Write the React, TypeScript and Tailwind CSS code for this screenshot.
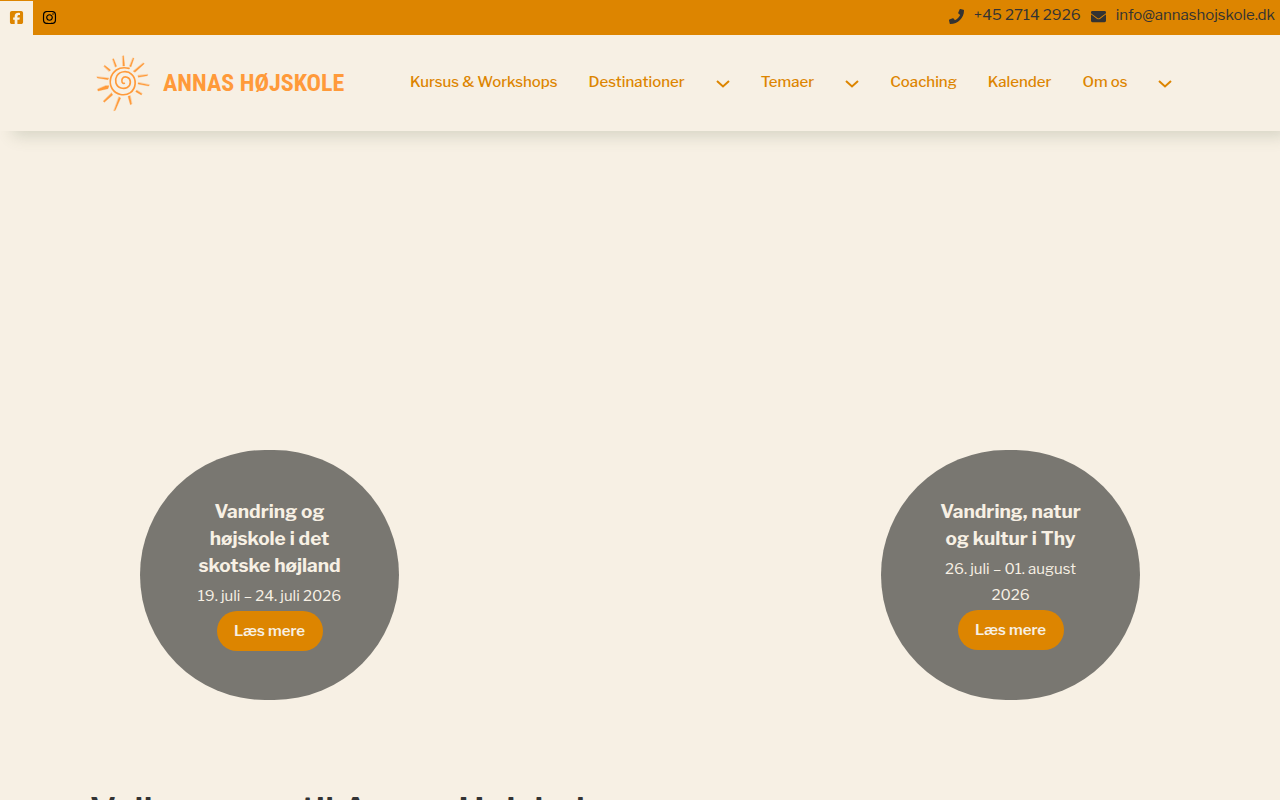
import { FaEnvelope, FaInstagram, FaPhone } from "react-icons/fa";
import { FaSquareFacebook } from "react-icons/fa6";

type NavItem = { label: string; menu?: boolean };
type Course = { title: string; date: string };

const nav: NavItem[] = [
  { label: "Kursus & Workshops" },
  { label: "Destinationer", menu: true },
  { label: "Temaer", menu: true },
  { label: "Coaching" },
  { label: "Kalender" },
  { label: "Om os", menu: true },
];

const courses: Course[] = [
  { title: "Vandring og højskole i det skotske højland", date: "19. juli – 24. juli 2026" },
  { title: "Vandring, natur og kultur i Thy", date: "26. juli – 01. august 2026" },
];

function Sun() {
  return (
    <svg viewBox="46 27 165 174" className="h-[58px] w-[55px]" fill="#ff9a3a" stroke="#ff9a3a" strokeLinecap="round" strokeLinejoin="round" aria-hidden="true">
      <path
        d="M131 115C125 117 121 109 125 101C131 91 149 96 149 111C149 127 134 133 121 129C104 124 101 105 109 92C118 78 141 76 153 88C169 103 166 131 149 143C131 155 106 149 95 132C83 113 89 88 107 75C119 67 132 67 145 70"
        fill="none"
        strokeWidth="5"
      />
      <path
        strokeWidth="1"
        d="M126 33L129 32L132 63L127 63ZM157 39L160 40L151 66L147 64ZM188 54L191 56L163 82L158 79ZM201 89L200 92L173 97L172 92ZM206 120L204 123L172 117L173 113ZM184 146L182 150L165 140L168 136ZM153 177L149 179L142 154L148 152ZM100 197L104 196L120 159L115 156ZM68 169L71 172L96 150L93 144ZM51 133L52 138L82 131L85 122L75 122ZM49 96L50 99L82 104L84 100ZM70 64L72 61L90 75L86 79ZM96 42L99 41L108 64L104 66Z"
      />
    </svg>
  );
}

function Chevron() {
  return (
    <svg viewBox="0 0 14 8" className="h-2 w-3.5" fill="none" stroke="currentColor" strokeWidth="2" aria-hidden="true">
      <path d="M1 1L7 6.5L13 1" />
    </svg>
  );
}

export default function App() {
  return (
    <div className="min-h-screen overflow-x-clip bg-[#f7f0e4] pb-10 font-['Libre_Franklin','Inter',sans-serif] text-[15px] text-[#333]">
      <div className="relative z-10 flex h-[35px] justify-between bg-[#dd8500]">
        <div className="flex items-end">
          <a href="#facebook" aria-label="Facebook" className="flex h-[34px] w-[33px] items-center justify-center bg-[#f7f0e4] pb-0.5 text-[#dd8500]">
            <FaSquareFacebook size={15} />
          </a>
          <a href="#instagram" aria-label="Instagram" className="flex h-[34px] w-[33px] items-center justify-center pb-0.5 text-black">
            <FaInstagram size={15} />
          </a>
        </div>
        <div className="flex gap-2.5 pr-[5px] leading-[30px]">
          <a href="tel:+4527142926" className="flex gap-2.5">
            <FaPhone size={15} className="mt-[9px]" />
            +45 2714 2926
          </a>
          <a href="mailto:info@annashojskole.dk" className="flex gap-2.5">
            <FaEnvelope size={15} className="mt-[9px]" />
            info@annashojskole.dk
          </a>
        </div>
      </div>

      <header className="relative flex h-24 items-center bg-[#f7f0e4] pl-24 shadow-[10px_8px_15px_-3px_rgba(80,100,70,0.2)]">
        <a href="#top" aria-label="Annas Højskole" className="flex w-[314px] items-center gap-3 text-[#ff9a3a]">
          <Sun />
          <span className="whitespace-nowrap font-['Liberation_Sans_Narrow','Roboto_Condensed',sans-serif] text-[24px] font-bold">ANNAS HØJSKOLE</span>
        </a>
        <nav className="flex items-center gap-[31px] pb-0.5 font-medium whitespace-nowrap text-[#dd8500]">
          {nav.map((item) => (
            <div key={item.label} className="flex items-center gap-[31px]">
              <a href="#menu">{item.label}</a>
              {item.menu && (
                <button type="button" aria-label={`Vis ${item.label}`} className="pt-1">
                  <Chevron />
                </button>
              )}
            </div>
          ))}
        </nav>
      </header>

      <main>
        <section className="flex items-start justify-between px-[140px] pt-[319px] pb-[88px]">
          {courses.map((course) => (
            <article key={course.date} className="flex h-[250px] w-[259px] flex-col items-center rounded-full bg-[#797771] px-[50px] pt-12 text-center text-[#f7f0e4]">
              <h3 className="text-[19px] leading-[27px] font-bold">{course.title}</h3>
              <p className="mt-1 leading-[26px]">{course.date}</p>
              <a href="#kursus" className="mt-0.5 flex h-10 w-[106px] items-center justify-center rounded-[20px] bg-[#dd8500] font-semibold">
                Læs mere
              </a>
            </article>
          ))}
        </section>
        <h1 className="px-[90px] text-[36px] leading-[46px] font-semibold">Velkommen til Annas Højskole</h1>
      </main>
    </div>
  );
}
